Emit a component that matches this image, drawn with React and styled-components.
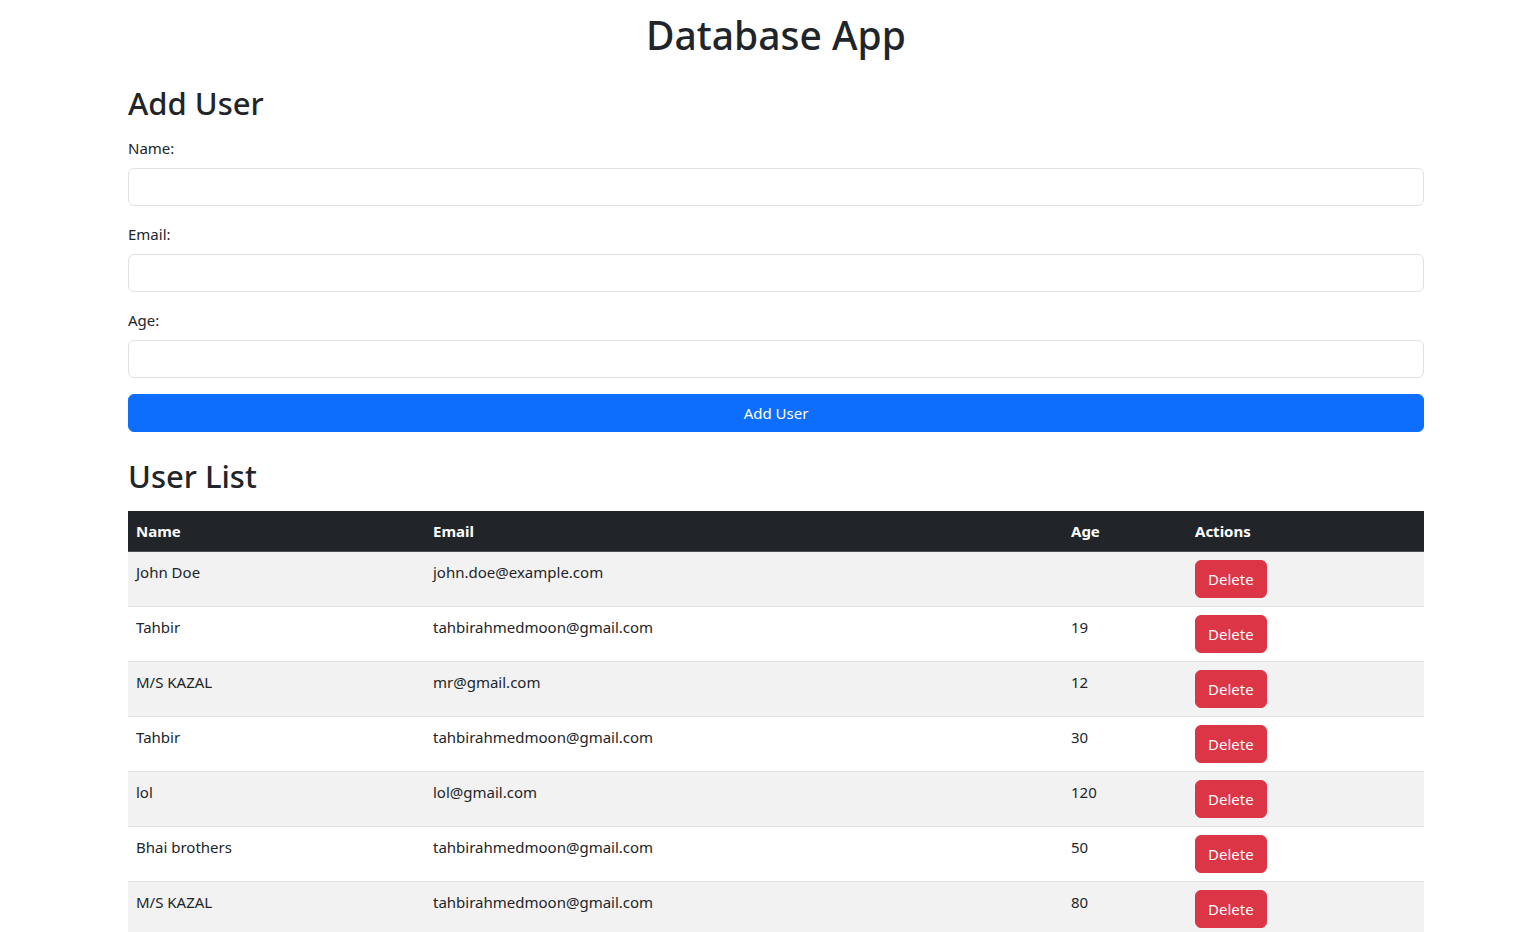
import React from "react";
import styled, { createGlobalStyle } from "styled-components";

const Global = createGlobalStyle`
  * { box-sizing: border-box; }
  html, body { margin: 0; padding: 0; background: #fff; }
  body {
    padding-left: 12px;
    font-family: "Noto Sans", "Open Sans", sans-serif;
    font-size: 16px;
    line-height: 1.5;
    color: #212529;
  }
`;

const Container = styled.div`
  max-width: 1320px;
  margin: 0 auto;
  padding: 0 12px;
`;

const Title = styled.h1`
  margin: 12px 0 26px;
  font-size: 39px;
  font-weight: 500;
  line-height: 1.2;
  text-align: center;
`;

const SectionTitle = styled.h2`
  margin: ${(p) => p.$top || 0}px 0 ${(p) => p.$bottom || 8}px;
  font-size: 31px;
  font-weight: 500;
  line-height: 1.2;
`;

const Form = styled.form`
  display: flex;
  flex-direction: column;
  gap: 16px;
`;

const Field = styled.div`
  display: flex;
  flex-direction: column;
  gap: 8px;
`;

const Label = styled.label`
  font-size: 15px;
  line-height: 24px;
`;

const Input = styled.input`
  height: 38px;
  width: 100%;
  padding: 6px 12px;
  font: inherit;
  border: 1px solid #dee2e6;
  border-radius: 6px;
  background: #fff;
`;

const Button = styled.button`
  height: 38px;
  padding: 6px 12px;
  font-family: inherit;
  font-size: 15px;
  line-height: 24px;
  color: #fff;
  border: 1px solid ${(p) => p.$color};
  background: ${(p) => p.$color};
  border-radius: 6px;
  width: ${(p) => (p.$block ? "100%" : "auto")};
  cursor: pointer;
`;

const Table = styled.table`
  width: 100%;
  border-collapse: collapse;
  table-layout: fixed;
  font-size: 15px;
`;

const Th = styled.th`
  width: ${(p) => p.$w}px;
  background: #212529;
  color: #fff;
  font-weight: 700;
  text-align: left;
  padding: 8px;
  line-height: 24px;
  border-bottom: 1px solid #4d5154;
`;

const Tr = styled.tr`
  background: ${(p) => (p.$striped ? "#f2f2f2" : "#fff")};
  border-bottom: 1px solid #dee2e6;
`;

const Td = styled.td`
  padding: 8px;
  vertical-align: top;
  line-height: 24px;
`;

const users = [
  ["John Doe", "john.doe@example.com", ""],
  ["Tahbir", "tahbirahmedmoon@gmail.com", "19"],
  ["M/S KAZAL", "mr@gmail.com", "12"],
  ["Tahbir", "tahbirahmedmoon@gmail.com", "30"],
  ["lol", "lol@gmail.com", "120"],
  ["Bhai brothers", "tahbirahmedmoon@gmail.com", "50"],
  ["M/S KAZAL", "tahbirahmedmoon@gmail.com", "80"],
];

export default function App() {
  return (
    <>
      <Global />
      <Container>
        <Title>Database App</Title>
        <SectionTitle $bottom={14}>Add User</SectionTitle>
        <Form onSubmit={(e) => e.preventDefault()}>
          <Field>
            <Label>Name:</Label>
            <Input type="text" />
          </Field>
          <Field>
            <Label>Email:</Label>
            <Input type="email" />
          </Field>
          <Field>
            <Label>Age:</Label>
            <Input type="number" />
          </Field>
          <Button $block $color="#0d6efd" type="submit">
            Add User
          </Button>
        </Form>
        <SectionTitle $top={26} $bottom={16}>User List</SectionTitle>
        <Table>
          <thead>
            <tr>
              <Th $w={297}>Name</Th>
              <Th $w={638}>Email</Th>
              <Th $w={124}>Age</Th>
              <Th $w={237}>Actions</Th>
            </tr>
          </thead>
          <tbody>
            {users.map((u, i) => (
              <Tr key={i} $striped={i % 2 === 0}>
                <Td>{u[0]}</Td>
                <Td>{u[1]}</Td>
                <Td>{u[2]}</Td>
                <Td>
                  <Button $color="#dc3545">Delete</Button>
                </Td>
              </Tr>
            ))}
          </tbody>
        </Table>
      </Container>
    </>
  );
}
